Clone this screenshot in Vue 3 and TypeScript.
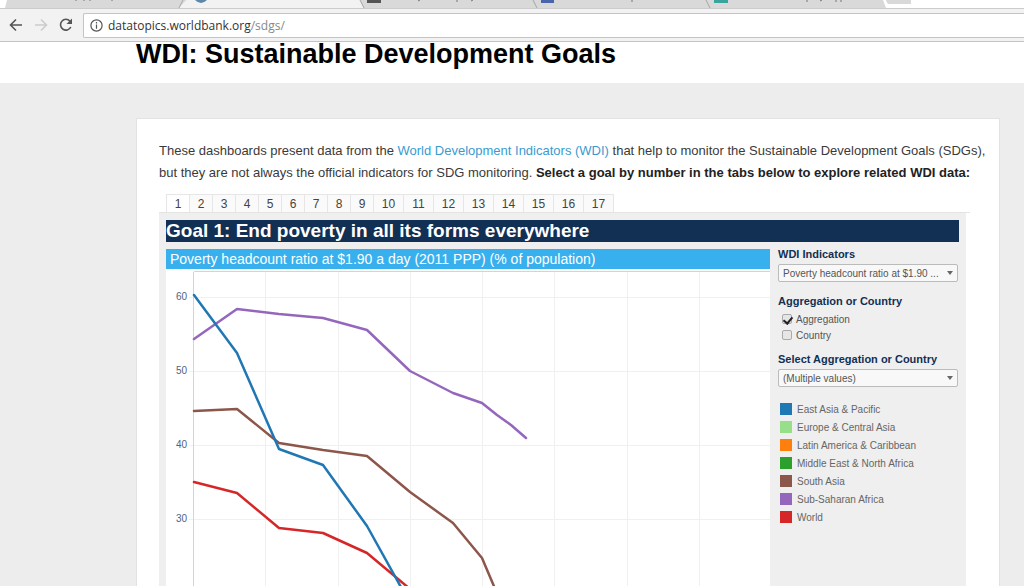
<script setup lang="ts">
import { ref } from 'vue'

const goals = Array.from({ length: 17 }, (_, i) => i + 1)
const activeGoal = ref(1)
const showAggregation = ref(true)
const showCountry = ref(false)

interface Region { name: string; color: string }
const regions: Region[] = [
  { name: 'East Asia & Pacific', color: '#1f77b4' },
  { name: 'Europe & Central Asia', color: '#98df8a' },
  { name: 'Latin America & Caribbean', color: '#ff7f0e' },
  { name: 'Middle East & North Africa', color: '#2ca02c' },
  { name: 'South Asia', color: '#8c564b' },
  { name: 'Sub-Saharan Africa', color: '#9467bd' },
  { name: 'World', color: '#d62728' },
]

const verticals = [99, 172, 244, 316, 388, 461, 533]
const ticks = [
  { y: 26, label: '60' },
  { y: 100, label: '50' },
  { y: 174, label: '40' },
  { y: 248, label: '30' },
]
const lines = [
  { color: '#8c564b', points: '28,140 71,138 113,172 157,179 201,185 244,221 287,252 316,287 330,320' },
  { color: '#d62728', points: '28,211 71,222 113,257 157,262 201,282 244,318' },
  { color: '#9467bd', points: '28,68 71,38 113,43 157,47 201,59 244,100 287,122 316,132 331,144 345,154 360,167' },
  { color: '#1f77b4', points: '28,24 71,82 113,178 157,194 201,255 236,318' },
]
</script>

<template>
  <div class="browser">
    <svg class="tabstrip" width="1024" height="8" viewBox="0 0 1024 8" aria-hidden="true">
      <path d="M7 0H187L179 8H5Z" fill="#d9d9d9" />
      <path d="M360 0H883L886 8H363Z" fill="#d9d9d9" />
      <path d="M187 0H360L364 8H179Z" fill="#f2f2f2" />
      <path d="M886 0H911V4H889Q887 4 886 0Z" fill="#d9d9d9" />
      <path d="M183 0L179 8M360 0L364 8M533 0L537 8M706 0L710 8" stroke="#a5a5a5" fill="none" />
      <path d="M195 0Q201 6 207 0Z" fill="#5c87a8" />
      <path d="M367 0H381V3H367Z" fill="#555" />
      <path d="M541 0H554V3H541Z" fill="#4a64ad" />
      <path d="M714 0H728V3H714Z" fill="#3ba49c" />
      <path d="M76 0V1M84 0V1M90 0V1M112 0V1M418 1L420 0M457 0V2M471 1L473 0M632 0V2M807 0V2M820 1L822 0M836 0V2M841 0V2" stroke="#777" fill="none" />
    </svg>
    <header class="toolbar">
      <button type="button" class="nav" aria-label="Back">
        <svg width="14" height="14" viewBox="0 0 14 14"><path d="M13 7H2M7 1.5L1.5 7L7 12.5" /></svg>
      </button>
      <button type="button" class="nav dim" aria-label="Forward">
        <svg width="14" height="14" viewBox="0 0 14 14"><path d="M1 7H12M7 1.5L12.5 7L7 12.5" /></svg>
      </button>
      <button type="button" class="nav" aria-label="Reload">
        <svg width="14" height="14" viewBox="0 0 14 14"><path d="M11.8 9A5.4 5.4 0 1 1 11 3.2" /><path class="solid" d="M13 0.5V6H7.5Z" /></svg>
      </button>
      <div class="address">
        <svg width="13" height="13" viewBox="0 0 13 13"><circle cx="6.5" cy="6.5" r="5.6" /><path d="M6.5 5.5V9.8M6.5 3V4.4" /></svg>
        <span>datatopics.worldbank.org<span class="path">/sdgs/</span></span>
      </div>
    </header>

    <div class="page">
      <div class="masthead"><h1>WDI: Sustainable Development Goals</h1></div>
      <main class="card">
        <p class="intro">
          These dashboards present data from the <a href="#wdi">World Development Indicators (WDI)</a> that help to monitor the Sustainable Development Goals (SDGs),<br>
          but they are not always the official indicators for SDG monitoring. <b>Select a goal by number in the tabs below to explore related WDI data:</b>
        </p>
        <nav class="tabs" aria-label="Goals">
          <button
            v-for="g in goals" :key="g" type="button"
            :class="{ active: g === activeGoal, wide: g > 9 }" @click="activeGoal = g"
          >{{ g }}</button>
        </nav>
        <section class="dashboard">
          <h2>Goal 1: End poverty in all its forms everywhere</h2>
          <div class="columns">
            <div class="chart">
              <h3>Poverty headcount ratio at $1.90 a day (2011 PPP) (% of population)</h3>
              <svg viewBox="0 0 604 400" role="img" aria-label="Poverty headcount ratio by region">
                <path class="frame" d="M28 0.5H604" />
                <path v-for="x in verticals" :key="x" class="grid" :d="`M${x}.5 1V400`" />
                <g v-for="t in ticks" :key="t.y">
                  <path class="grid" :d="`M23 ${t.y}.5H604`" />
                  <text x="21" :y="t.y + 3">{{ t.label }}</text>
                </g>
                <path class="frame" d="M27.5 1V400" />
                <polyline v-for="l in lines" :key="l.color" :points="l.points" :stroke="l.color" />
              </svg>
            </div>
            <aside>
              <label class="heading" for="indicator">WDI Indicators</label>
              <div class="select">
                <select id="indicator"><option>Poverty headcount ratio at $1.90 ...</option></select>
              </div>
              <fieldset>
                <legend class="heading">Aggregation or Country</legend>
                <label class="check"><input v-model="showAggregation" type="checkbox">Aggregation</label>
                <label class="check"><input v-model="showCountry" type="checkbox">Country</label>
              </fieldset>
              <label class="heading" for="members">Select Aggregation or Country</label>
              <div class="select">
                <select id="members"><option>(Multiple values)</option></select>
              </div>
              <ul>
                <li v-for="r in regions" :key="r.name">
                  <span class="swatch" :style="{ background: r.color }"></span>{{ r.name }}
                </li>
              </ul>
            </aside>
          </div>
        </section>
      </main>
    </div>
  </div>
</template>

<style>
body { margin: 0; overflow: hidden; }
</style>

<style scoped>
* { box-sizing: border-box; }
.browser {
  height: 100vh;
  display: flex;
  flex-direction: column;
  overflow: hidden;
  background: #fff;
  font-family: "Liberation Sans", Arial, sans-serif;
  color: #3a3a3a;
}
.tabstrip { display: block; flex: none; }
.toolbar {
  flex: none;
  height: 34px;
  display: flex;
  align-items: center;
  gap: 11px;
  padding-left: 9px;
  background: #f2f2f2;
  border-top: 1px solid #ccc;
  border-bottom: 1px solid #c4c4c4;
}
.nav { width: 14px; height: 14px; padding: 0; border: 0; background: none; }
.nav svg { display: block; fill: none; stroke: #555; stroke-width: 1.6; }
.nav.dim svg { stroke: #ccc; }
.nav .solid { fill: #555; stroke: none; }
.address {
  flex: 1;
  height: 25px;
  margin-left: -1px;
  padding-left: 6px;
  display: flex;
  align-items: center;
  gap: 5px;
  background: #fff;
  border: 1px solid #c4c4c4;
  border-right: 0;
  border-radius: 2px 0 0 2px;
  font: 12px "Open Sans", sans-serif;
  color: #333;
}
.address svg { fill: none; stroke: #555; stroke-width: 1.2; }
.path { color: #888; }

.page { flex: 1; min-height: 0; background: #ededed; }
.masthead { height: 41px; padding-left: 136px; background: #fff; }
h1 { margin: 0; font-size: 27px; line-height: 25px; color: #000; white-space: nowrap; }
.card {
  margin: 35px 24px 0 136px;
  padding: 21px 29px 40px 22px;
  background: #fff;
  border: 1px solid #e2e2e2;
}
.intro { margin: 0; font-size: 13px; line-height: 22px; white-space: nowrap; }
.intro a { color: #3a9bd0; text-decoration: none; }
.intro b { color: #222; }
.tabs {
  display: flex;
  margin-top: 10px;
  padding-left: 7px;
  border-bottom: 1px solid #e4e4e4;
}
.tabs button {
  width: 23px;
  height: 18px;
  padding: 0;
  border: 1px solid #e6e6e6;
  border-width: 1px 1px 0 0;
  background: #fafafa;
  font: 12px "Liberation Sans", Arial, sans-serif;
  color: #444;
}
.tabs button.wide { width: 30px; }
.tabs button:first-child { width: 24px; border-left-width: 1px; }
.tabs button.active { background: #fff; }
.dashboard { margin-right: 4px; padding: 7px; background: #efefef; }
h2 { margin: 0; font-size: 19px; line-height: 22px; color: #fff; background: #122f54; white-space: nowrap; }
.columns { display: grid; grid-template-columns: 1fr 180px; gap: 8px; margin-top: 7px; padding-right: 1px; }
h3 { margin: 0; padding-left: 4px; font-size: 14px; font-weight: normal; line-height: 20px; color: #fff; background: #38b0ee; white-space: nowrap; }
.chart { background: #fff; }
.chart svg { display: block; width: 100%; margin-top: 2px; }
.frame { stroke: #d4d4d4; fill: none; }
.grid { stroke: #f0f0f0; fill: none; }
.chart text { font-size: 10px; text-anchor: end; fill: #4f6580; }
.chart polyline { fill: none; stroke-width: 2.5; stroke-linejoin: round; stroke-linecap: round; }
aside { font-size: 10px; color: #555; }
.heading { display: block; padding: 0; font-size: 11px; font-weight: bold; line-height: 11px; color: #122f54; }
.select { position: relative; margin-top: 4px; }
.select::after {
  content: "";
  position: absolute;
  right: 5px;
  top: 7px;
  border: 3px solid transparent;
  border-top: 4px solid #666;
  border-bottom: 0;
  pointer-events: none;
}
select {
  display: block;
  width: 100%;
  height: 18px;
  padding: 0 4px;
  appearance: none;
  border: 1px solid #bbb;
  border-radius: 2px;
  background: #f8f8f8;
  font: 10px "Liberation Sans", Arial, sans-serif;
  color: #555;
}
fieldset { margin: 14px 0 11px; padding: 0; border: 0; }
.check { display: flex; align-items: center; gap: 4px; height: 16px; padding-left: 4px; }
legend + .check { margin-top: 4px; }
.check input {
  appearance: none;
  width: 10px;
  height: 10px;
  margin: 0;
  border: 1px solid #aaa;
  border-radius: 2px;
  background: #e6e6e6;
}
.check input:checked::after {
  content: "";
  display: block;
  width: 4px;
  height: 7px;
  margin: 0 2px;
  border: solid #222;
  border-width: 0 2px 2px 0;
  transform: rotate(40deg);
}
ul { margin: 13px 0 0; padding: 0 0 0 2px; list-style: none; }
li { display: flex; align-items: center; gap: 5px; height: 18px; color: #666; white-space: nowrap; }
.swatch { width: 12px; height: 12px; }
</style>
